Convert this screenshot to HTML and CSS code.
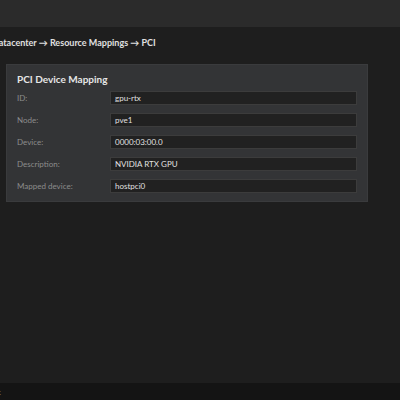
FILE: index.html
```html
<!DOCTYPE html>
<html>
<head>
<meta charset="utf-8">
<link rel="stylesheet" href="styles.css">
</head>
<body>
<div class="app">
  <header class="topbar"></header>
  <main class="content">
    <div class="breadcrumb">Datacenter → Resource Mappings → PCI</div>
    <section class="card">
      <h2 class="card-title">PCI Device Mapping</h2>
      <div class="row"><span class="label">ID:</span><div class="field">gpu-rtx</div></div>
      <div class="row"><span class="label">Node:</span><div class="field">pve1</div></div>
      <div class="row"><span class="label">Device:</span><div class="field">0000:03:00.0</div></div>
      <div class="row"><span class="label">Description:</span><div class="field">NVIDIA RTX GPU</div></div>
      <div class="row"><span class="label">Mapped device:</span><div class="field">hostpci0</div></div>
    </section>
  </main>
  <footer class="statusbar"><span class="status-text">Task list</span></footer>
</div>
</body>
</html>
```
FILE: styles.css
```css
html, body {
  margin: 0;
  padding: 0;
  height: 100%;
  background: #1e1e1e;
  font-family: Lato, "Noto Sans", sans-serif;
}
.app {
  display: flex;
  flex-direction: column;
  height: 400px;
  overflow: hidden;
}
.topbar {
  height: 27px;
  background: #2b2b2b;
  flex: none;
}
.content {
  flex: 1;
  padding: 0 32px 0 6px;
}
.breadcrumb {
  margin-left: -14px;
  height: 32px;
  line-height: 32px;
  font-size: 9px;
  font-weight: 700;
  color: #e0e0e0;
  white-space: nowrap;
  margin-bottom: 5px;
}
.card {
  width: 362px;
  box-sizing: border-box;
  background: #333436;
  border: 1px solid #3a3b3d;
  padding: 7px 10px 8px 10px;
}
.card-title {
  margin: 0 0 5px 0;
  font-size: 10px;
  font-weight: 700;
  color: #e6e6e6;
  line-height: 14px;
}
.row {
  display: flex;
  align-items: center;
  height: 14px;
  margin-bottom: 8px;
}
.row:last-child { margin-bottom: 0; }
.label {
  width: 93px;
  font-size: 8px;
  color: #8c8c8c;
  flex: none;
}
.field {
  width: 247px;
  height: 14px;
  box-sizing: border-box;
  background: #212121;
  border: 1px solid #3c3c3c;
  color: #e0e0e0;
  font-size: 8px;
  line-height: 12px;
  padding: 0 4px;
}
.statusbar {
  height: 17px;
  background: #141414;
  flex: none;
  display: flex;
  align-items: center;
}
.status-text {
  margin-left: -27px;
  font-size: 8px;
  color: #999;
  white-space: nowrap;
}
```
